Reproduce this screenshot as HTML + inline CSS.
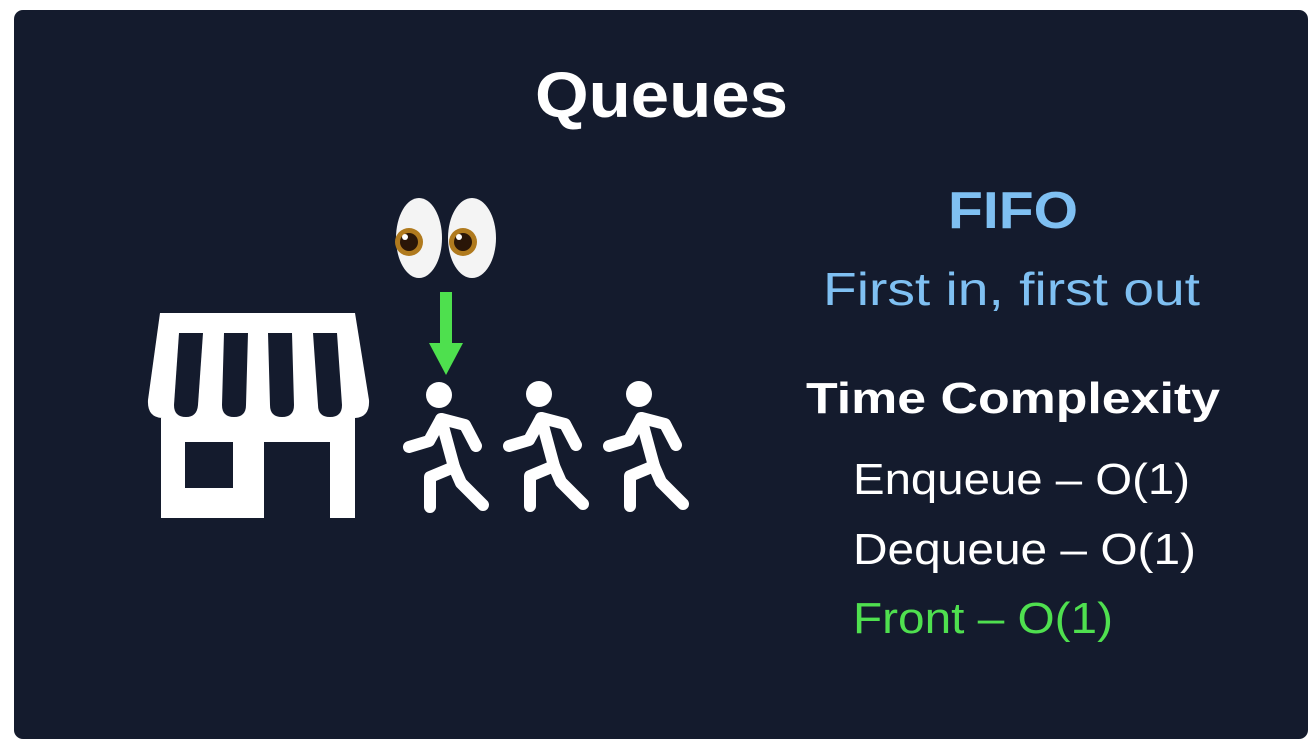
<!DOCTYPE html>
<html><head><meta charset="utf-8"><style>
html,body{margin:0;padding:0;background:#fff;width:1316px;height:749px;overflow:hidden}
svg{display:block}
text{font-family:"Liberation Sans",sans-serif}
</style></head><body>
<svg width="1316" height="749" viewBox="0 0 1316 749">
<rect x="14" y="10" width="1294" height="729" rx="9" fill="#141b2d"/>
<text x="535" y="117" font-size="64" font-weight="bold" fill="#fff" textLength="253" lengthAdjust="spacingAndGlyphs">Queues</text>
<text x="948" y="228" font-size="52" font-weight="bold" fill="#7fc0f2" textLength="130" lengthAdjust="spacingAndGlyphs">FIFO</text>
<text x="823" y="305" font-size="46" fill="#7fc0f2" textLength="377" lengthAdjust="spacingAndGlyphs">First in, first out</text>
<text x="806" y="413" font-size="44" font-weight="bold" fill="#fff" textLength="414" lengthAdjust="spacingAndGlyphs">Time Complexity</text>
<text x="853" y="494" font-size="44" fill="#fff" textLength="337" lengthAdjust="spacingAndGlyphs">Enqueue – O(1)</text>
<text x="853" y="564" font-size="44" fill="#fff" textLength="343" lengthAdjust="spacingAndGlyphs">Dequeue – O(1)</text>
<text x="853" y="633" font-size="44" fill="#4fe04f" textLength="260" lengthAdjust="spacingAndGlyphs">Front – O(1)</text>

<!-- store -->
<path d="M160 313 L355 313 L369 400 Q370 417 355 418 L162 418 Q147 417 148 400 Z" fill="#fff"/>
<g fill="#141b2d">
<path d="M179 333 H203 L198 405 Q197 417 186 417 Q174 417 174 405 Z"/>
<path d="M224 333 H248 L246 405 Q246 417 234 417 Q222 417 222 405 Z"/>
<path d="M268 333 H292 L294 405 Q294 417 282 417 Q270 417 270 405 Z"/>
<path d="M313 333 H337 L342 405 Q342 417 330 417 Q318 417 318 405 Z"/>
</g>
<rect x="161" y="418" width="194" height="100" fill="#fff"/>
<rect x="185" y="442" width="48" height="46" fill="#141b2d"/>
<rect x="264" y="442" width="66" height="77" fill="#141b2d"/>

<!-- eyes -->
<ellipse cx="419" cy="238" rx="23" ry="40" fill="#f4f4f4"/>
<ellipse cx="472" cy="238" rx="24" ry="40" fill="#f4f4f4"/>
<circle cx="409" cy="242" r="14" fill="#b07a1e"/>
<circle cx="409" cy="242" r="9" fill="#2a1608"/>
<circle cx="405" cy="237" r="3" fill="#fff"/>
<circle cx="463" cy="242" r="14" fill="#b07a1e"/>
<circle cx="463" cy="242" r="9" fill="#2a1608"/>
<circle cx="459" cy="237" r="3" fill="#fff"/>

<!-- arrow -->
<rect x="440" y="292" width="12" height="53" fill="#4ee04e"/>
<path d="M429 343 H463 L446 375 Z" fill="#4ee04e"/>

<!-- walkers -->
<defs>
<g id="w">
<circle cx="0" cy="0" r="13" fill="#fff"/>
<g fill="none" stroke="#fff" stroke-width="12" stroke-linecap="round" stroke-linejoin="round">
<path d="M2 24 L15 72"/>
<path d="M1 26 L-10 46 L-30 52"/>
<path d="M3 24 L26 30 L37 51"/>
<path d="M15 72 L-9 82 L-9 112"/>
<path d="M15 72 L22 88 L44 110"/>
</g>
</g>
</defs>
<use href="#w" x="439" y="395"/>
<use href="#w" x="539" y="394"/>
<use href="#w" x="639" y="394"/>
</svg>
</body></html>
